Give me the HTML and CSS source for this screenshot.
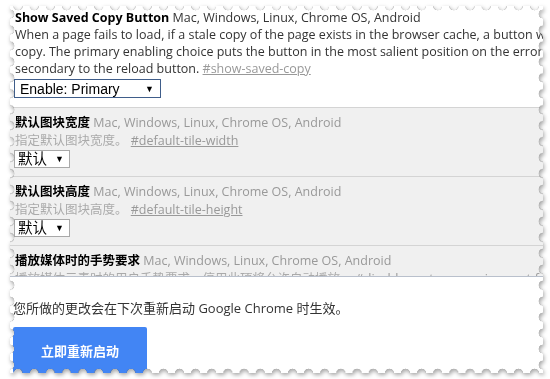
FILE: index.html
```html
<!DOCTYPE html>
<html lang="zh-CN">
<head>
    <meta charset="UTF-8">
    <title>chrome://flags</title>
    <link rel="stylesheet" href="styles.css">
</head>
<body>
    <div class="stage">
        <div class="shadow">
            <div class="paper">
                <div class="flags">
                    <div class="flag">
                        <div class="flag-head"><span class="flag-name">Show Saved Copy Button</span> <span class="flag-platforms">Mac, Windows, Linux, Chrome OS, Android</span></div>
                        <div class="flag-desc">When a page fails to load, if a stale copy of the page exists in the browser cache, a button will be presented to allow the user to load that stale<br>copy. The primary enabling choice puts the button in the most salient position on the error page; the secondary enabling choice puts it<br>secondary to the reload button. <a class="flag-link" href="#show-saved-copy">#show-saved-copy</a></div>
                        <div class="select select-wide">Enable: Primary<span class="arrow">▼</span></div>
                    </div>
                    <div class="flag flag-gray">
                        <div class="flag-head"><span class="flag-name">默认图块宽度</span> <span class="flag-platforms">Mac, Windows, Linux, Chrome OS, Android</span></div>
                        <div class="flag-desc">指定默认图块宽度。 <a class="flag-link" href="#default-tile-width">#default-tile-width</a></div>
                        <div class="select">默认<span class="arrow">▼</span></div>
                    </div>
                    <div class="flag flag-gray">
                        <div class="flag-head"><span class="flag-name">默认图块高度</span> <span class="flag-platforms">Mac, Windows, Linux, Chrome OS, Android</span></div>
                        <div class="flag-desc">指定默认图块高度。 <a class="flag-link" href="#default-tile-height">#default-tile-height</a></div>
                        <div class="select">默认<span class="arrow">▼</span></div>
                    </div>
                    <div class="flag flag-gray">
                        <div class="flag-head"><span class="flag-name">播放媒体时的手势要求</span> <span class="flag-platforms">Mac, Windows, Linux, Chrome OS, Android</span></div>
                        <div class="flag-desc">播放媒体元素时的用户手势要求。停用此项将允许自动播放。 <a class="flag-link" href="#disable-gesture-requirement-for-media-playback">#disable-gesture-requirement-for-media-playback</a></div>
                        <div class="select">默认<span class="arrow">▼</span></div>
                    </div>
                </div>
                <div class="footer">
                    <div class="footer-note">您所做的更改会在下次重新启动 Google Chrome 时生效。</div>
                    <button class="relaunch">立即重新启动</button>
                </div>
            </div>
        </div>
    </div>
</body>
</html>
```

FILE: styles.css
```css
body { margin: 0; background: #fff; font-family: "Open Sans", "Noto Sans CJK SC", sans-serif; font-size: 12.5px; color: #333; }
.stage { height: 379px; padding: 6px 7px 6px 10px; box-sizing: border-box; }
.shadow { height: 100%; filter: drop-shadow(0 0 0.7px #555) drop-shadow(1px 2px 2px rgba(0,0,0,0.35)); }
.paper {
    height: 100%; background: #fff; display: flex; flex-direction: column; overflow: hidden;
    mask-image:
        radial-gradient(circle at 50% 0, transparent 4px, #000 4.6px),
        radial-gradient(circle at 50% 100%, transparent 4px, #000 4.6px),
        radial-gradient(circle at 0 50%, transparent 4px, #000 4.6px),
        radial-gradient(circle at 100% 50%, transparent 4px, #000 4.6px);
    mask-size: 16px 100%, 16px 100%, 100% 16px, 100% 16px;
    mask-repeat: round no-repeat, round no-repeat, no-repeat round, no-repeat round;
    mask-composite: intersect;
}
.flags { flex: 0 0 270px; overflow: hidden; }
.flag { padding: 3px 0 9px 5px; border-bottom: 1px solid #d4d4d4; white-space: nowrap; }
.flag-gray { background: #f0f0f0; padding-top: 6px; padding-bottom: 8px; }
.flag-head { line-height: 17px; }
.flag-name { font-weight: bold; color: #000; }
.flag-desc { line-height: 17px; }
.flag-gray .flag-head, .flag-gray .flag-desc { line-height: 18px; }
.flag-gray .flag-platforms { color: #999; }
.flag-gray .flag-desc { color: #aaa; }
.flag-link { color: #999; text-decoration: underline; }
.select { display: inline-flex; align-items: center; justify-content: space-between; box-sizing: border-box; width: 56px; height: 18px; margin-left: -1px; padding: 0 5px 0 3px; background: #fff; border: 1px solid #a9a9a9; font-family: "Liberation Sans", "Noto Sans CJK SC", sans-serif; font-size: 14.5px; line-height: 16px; color: #000; }
.select-wide { width: 147px; height: 19px; margin-top: 2px; padding-left: 5px; padding-right: 6px; font-size: 14px; border-color: #3f5d8a; }
.arrow { font-size: 9px; }
.footer { flex: 1; border-top: 1px solid #b9c0cc; padding: 22px 0 0 3px; }
.footer-note { line-height: 18px; font-size: 13px; }
.relaunch { margin-top: 10px; width: 134px; height: 46px; border: none; border-radius: 2px; background: #4285f4; color: #fff; font-family: "Noto Sans CJK SC", sans-serif; font-weight: bold; font-size: 13px; }
```
